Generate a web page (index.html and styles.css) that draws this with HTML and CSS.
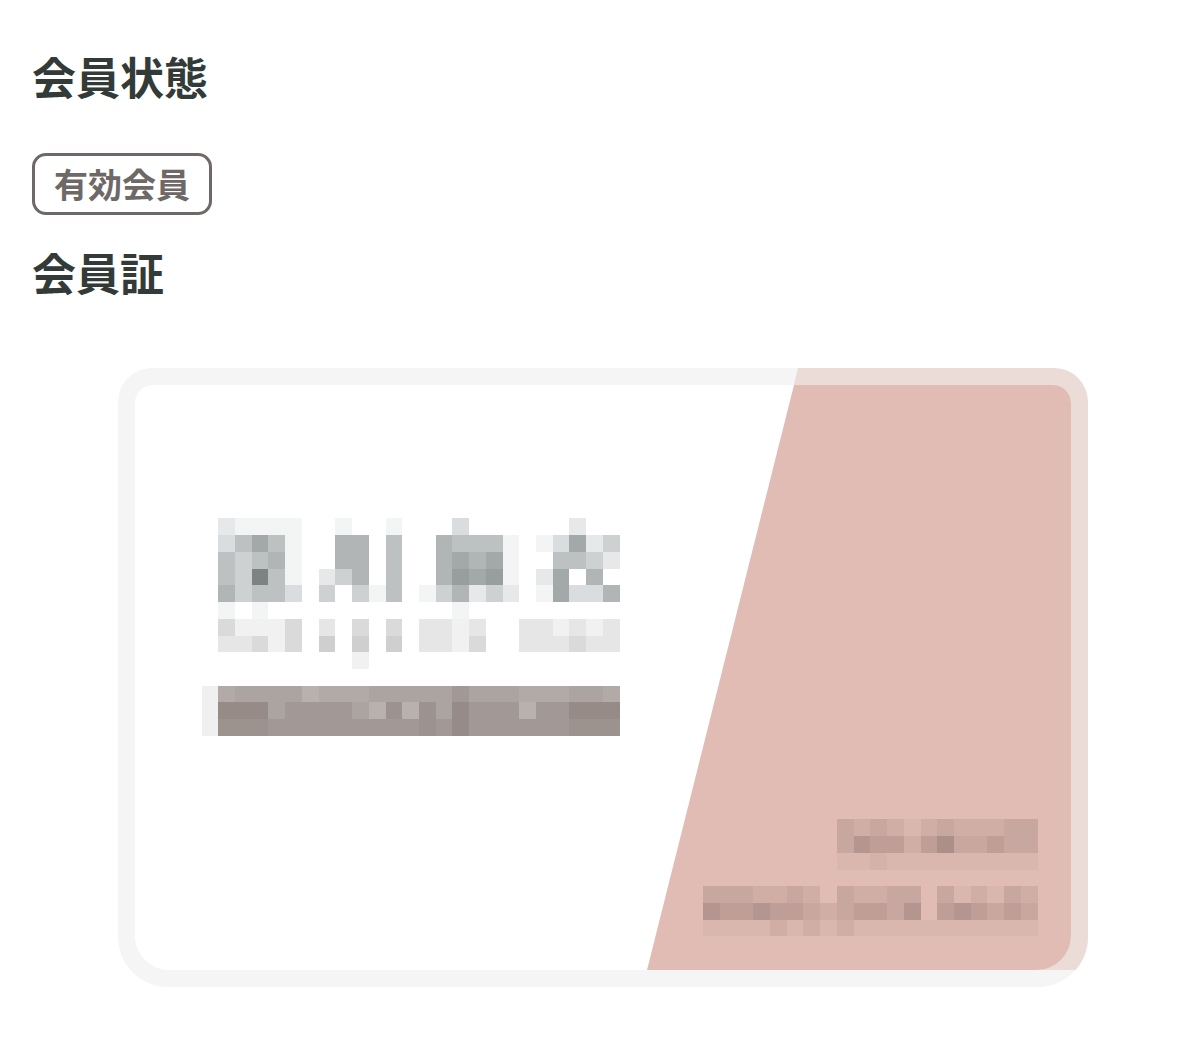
FILE: index.html
```html
<!DOCTYPE html>
<html lang="ja">
<head>
<meta charset="utf-8">
<title>会員状態</title>
<link rel="stylesheet" href="styles.css">
</head>
<body>
<main class="page">
  <h2 class="heading">会員状態</h2>
  <div class="status-row"><span class="badge">有効会員</span></div>
  <h2 class="heading heading-card">会員証</h2>
  <div class="card-wrap">
    <div class="card">
      <div class="card-inner">
        <div class="mosaic name-block">
          <i></i><i class="g2"></i><i class="g1"></i><i class="g1"></i><i class="g1"></i><i class="g1"></i><i></i><i></i><i class="g1"></i><i></i><i></i><i class="g1"></i><i></i><i></i><i></i><i class="g3"></i><i></i><i></i><i></i><i></i><i></i><i></i><i class="g2"></i><i></i><i></i>
          <i></i><i class="g3"></i><i class="g5"></i><i class="g7"></i><i class="g5"></i><i class="g1"></i><i></i><i></i><i class="g6"></i><i class="g6"></i><i></i><i class="g5"></i><i></i><i></i><i class="g6"></i><i class="g5"></i><i class="g5"></i><i class="g5"></i><i class="g1"></i><i></i><i class="g1"></i><i class="g3"></i><i class="g7"></i><i class="g2"></i><i class="g4"></i>
          <i></i><i class="g5"></i><i class="g4"></i><i class="g5"></i><i class="g6"></i><i class="g1"></i><i></i><i></i><i class="g6"></i><i class="g6"></i><i></i><i class="g5"></i><i></i><i></i><i class="g6"></i><i class="g7"></i><i class="g6"></i><i class="g7"></i><i class="g1"></i><i></i><i></i><i class="g5"></i><i class="g5"></i><i class="g4"></i><i class="g2"></i>
          <i></i><i class="g5"></i><i class="g4"></i><i class="g9"></i><i class="g5"></i><i class="g1"></i><i></i><i class="g2"></i><i class="g4"></i><i class="g6"></i><i></i><i class="g5"></i><i></i><i></i><i class="g6"></i><i class="g8"></i><i class="g7"></i><i class="g8"></i><i class="g1"></i><i></i><i class="g2"></i><i class="g7"></i><i></i><i class="g6"></i><i></i>
          <i></i><i class="g6"></i><i class="g4"></i><i class="g5"></i><i class="g5"></i><i class="g3"></i><i></i><i class="g4"></i><i></i><i class="g4"></i><i class="g1"></i><i class="g5"></i><i></i><i class="g1"></i><i class="g4"></i><i class="g6"></i><i class="g2"></i><i class="g4"></i><i class="g2"></i><i></i><i class="g1"></i><i class="g7"></i><i class="g3"></i><i class="g3"></i><i class="g6"></i>
          <i></i><i class="g1"></i><i></i><i class="g1"></i><i></i><i></i><i></i><i></i><i></i><i></i><i></i><i></i><i></i><i></i><i></i><i class="g1"></i><i></i><i></i><i></i><i></i><i></i><i></i><i></i><i></i><i></i>
          <i></i><i class="n3"></i><i class="n1"></i><i class="n1"></i><i class="n1"></i><i class="n3"></i><i></i><i class="n2"></i><i></i><i class="n3"></i><i></i><i class="n3"></i><i></i><i class="n2"></i><i class="n2"></i><i class="n1"></i><i class="n2"></i><i></i><i></i><i class="n2"></i><i class="n2"></i><i class="n1"></i><i class="n2"></i><i class="n1"></i><i class="n2"></i>
          <i></i><i class="n2"></i><i class="n2"></i><i class="n3"></i><i class="n1"></i><i class="n3"></i><i></i><i class="n4"></i><i></i><i class="n4"></i><i></i><i class="n4"></i><i></i><i class="n2"></i><i class="n2"></i><i class="n1"></i><i class="n3"></i><i></i><i></i><i class="n2"></i><i class="n2"></i><i class="n2"></i><i class="n3"></i><i class="n2"></i><i class="n2"></i>
          <i></i><i></i><i></i><i></i><i></i><i></i><i></i><i></i><i></i><i class="n1"></i><i></i><i></i><i></i><i></i><i></i><i></i><i></i><i></i><i></i><i></i><i></i><i></i><i></i><i></i><i></i>
          <i></i><i></i><i></i><i></i><i></i><i></i><i></i><i></i><i></i><i></i><i></i><i></i><i></i><i></i><i></i><i></i><i></i><i></i><i></i><i></i><i></i><i></i><i></i><i></i><i></i>
          <i class="e"></i><i class="b1"></i><i class="b2"></i><i class="b2"></i><i class="b2"></i><i class="b2"></i><i class="b6"></i><i class="b1"></i><i class="b1"></i><i class="b1"></i><i class="b2"></i><i class="b2"></i><i class="b2"></i><i class="b2"></i><i class="b2"></i><i class="b3"></i><i class="b2"></i><i class="b2"></i><i class="b2"></i><i class="b1"></i><i class="b1"></i><i class="b1"></i><i class="b2"></i><i class="b2"></i><i class="b1"></i>
          <i class="e"></i><i class="b5"></i><i class="b5"></i><i class="b5"></i><i class="b2"></i><i class="b3"></i><i class="b3"></i><i class="b3"></i><i class="b3"></i><i class="b2"></i><i class="b6"></i><i class="b4"></i><i class="b6"></i><i class="b4"></i><i class="b2"></i><i class="b5"></i><i class="b3"></i><i class="b3"></i><i class="b3"></i><i class="b6"></i><i class="b3"></i><i class="b3"></i><i class="b5"></i><i class="b5"></i><i class="b5"></i>
          <i class="e"></i><i class="b4"></i><i class="b4"></i><i class="b4"></i><i class="b3"></i><i class="b3"></i><i class="b3"></i><i class="b3"></i><i class="b3"></i><i class="b3"></i><i class="b3"></i><i class="b3"></i><i class="b3"></i><i class="b4"></i><i class="b3"></i><i class="b5"></i><i class="b3"></i><i class="b3"></i><i class="b3"></i><i class="b3"></i><i class="b3"></i><i class="b3"></i><i class="b4"></i><i class="b4"></i><i class="b4"></i>
        </div>
        <div class="mosaic code-block">
          <i class="p3"></i><i class="p2"></i><i class="p3"></i><i class="p2"></i><i class="p1"></i><i class="p2"></i><i class="p3"></i><i class="p2"></i><i class="p2"></i><i class="p2"></i><i class="p3"></i><i class="p3"></i>
          <i class="p3"></i><i class="p5"></i><i class="p4"></i><i class="p4"></i><i class="p2"></i><i class="p4"></i><i class="p6"></i><i class="p3"></i><i class="p3"></i><i class="p4"></i><i class="p3"></i><i class="p3"></i>
          <i class="p1"></i><i class="p1"></i><i class="p7"></i><i class="p1"></i><i class="p1"></i><i class="p1"></i><i class="p1"></i><i class="p1"></i><i class="p1"></i><i class="p1"></i><i class="p1"></i><i class="p1"></i>
        </div>
        <div class="mosaic date-block">
          <i class="p3"></i><i class="p3"></i><i class="p3"></i><i class="p2"></i><i class="p2"></i><i class="p3"></i><i class="p2"></i><i></i><i class="p3"></i><i class="p2"></i><i class="p2"></i><i class="p3"></i><i class="p3"></i><i></i><i class="p3"></i><i class="p1"></i><i class="p2"></i><i class="p1"></i><i class="p3"></i><i class="p2"></i>
          <i class="p5"></i><i class="p4"></i><i class="p4"></i><i class="p5"></i><i class="p4"></i><i class="p4"></i><i class="p3"></i><i class="p2"></i><i class="p3"></i><i class="p4"></i><i class="p4"></i><i class="p3"></i><i class="p5"></i><i></i><i class="p4"></i><i class="p5"></i><i class="p4"></i><i class="p3"></i><i class="p4"></i><i class="p3"></i>
          <i class="p1"></i><i class="p1"></i><i class="p1"></i><i class="p1"></i><i class="p2"></i><i class="p1"></i><i class="p2"></i><i class="p1"></i><i class="p2"></i><i class="p1"></i><i class="p1"></i><i class="p1"></i><i class="p1"></i><i class="p1"></i><i class="p1"></i><i class="p1"></i><i class="p1"></i><i class="p1"></i><i class="p1"></i><i class="p1"></i>
        </div>
      </div>
    </div>
  </div>
</main>
</body>
</html>
```
FILE: styles.css
```css
* { box-sizing: border-box; }

html, body {
  margin: 0;
  padding: 0;
  background: #ffffff;
}

body {
  font-family: "Noto Sans CJK JP", "Noto Sans", sans-serif;
  color: #333b39;
}

.page {
  --c: 16.724px;
  padding: 54px 32px 40px 32px;
}

.heading {
  margin: 0;
  font-size: 44px;
  line-height: 44px;
  font-weight: 700;
  color: #333b39;
}

.status-row {
  margin-top: 55px;
  display: flex;
}

.badge {
  display: inline-block;
  border: 3px solid #6e6866;
  border-radius: 14px;
  padding: 11px 19px;
  font-size: 34px;
  line-height: 34px;
  font-weight: 700;
  color: #6e6866;
}

.heading-card {
  margin-top: 35px;
}

.card-wrap {
  margin-top: 74px;
  padding-left: 86px;
}

.card {
  position: relative;
  width: calc(58 * var(--c));
  height: calc(37 * var(--c));
  padding: var(--c);
  background: #f5f5f6;
  border-radius: 34px 34px 50px 50px;
}

.card::before {
  content: "";
  position: absolute;
  inset: 0;
  border-radius: inherit;
  background: #ebdcd7;
  clip-path: polygon(680px 0, 100% 0, 100% calc(100% - var(--c)), 530px calc(100% - var(--c)));
}

.card-inner {
  position: relative;
  width: 100%;
  height: 100%;
  background: #ffffff;
  border-radius: 18px 18px 34px 34px;
  overflow: hidden;
  display: grid;
  grid-template-columns: repeat(56, var(--c));
  grid-template-rows: repeat(35, var(--c));
}

.card-inner::before {
  content: "";
  position: absolute;
  inset: 0;
  background: #e0bcb4;
  clip-path: polygon(70.4% 0, 100% 0, 100% 100%, 54.7% 100%);
}

.mosaic {
  position: relative;
  display: grid;
  grid-auto-rows: var(--c);
}

.mosaic i {
  display: block;
}

.name-block {
  grid-column: 5 / span 25;
  grid-row: 9 / span 13;
  grid-template-columns: repeat(25, var(--c));
}

.code-block {
  grid-column: 43 / span 12;
  grid-row: 27 / span 3;
  grid-template-columns: repeat(12, var(--c));
}

.date-block {
  grid-column: 35 / span 20;
  grid-row: 31 / span 3;
  grid-template-columns: repeat(20, var(--c));
}

/* name mosaic (cool gray) */
.g1 { background: #f3f4f4; }
.g2 { background: #e7e8e9; }
.g3 { background: #dadddf; }
.g4 { background: #cdd1d2; }
.g5 { background: #bdc1c2; }
.g6 { background: #b1b5b6; }
.g7 { background: #a3a8a9; }
.g8 { background: #989e9e; }
.g9 { background: #7d8383; }

/* romaji mosaic (neutral gray) */
.n1 { background: #f1f1f1; }
.n2 { background: #e6e6e7; }
.n3 { background: #dadadb; }
.n4 { background: #cfcfd0; }

/* bar mosaic */
.e  { background: #f0f0f0; }
.b1 { background: #b1aaa6; }
.b2 { background: #aca4a0; }
.b3 { background: #a29996; }
.b4 { background: #9c928e; }
.b5 { background: #968b87; }
.b6 { background: #b8b1ae; }

/* pink mosaic */
.p1 { background: #d9b6ae; }
.p2 { background: #d0aea6; }
.p3 { background: #c8a7a1; }
.p4 { background: #bf9e98; }
.p5 { background: #b49590; }
.p6 { background: #ad8f8a; }
.p7 { background: #d4b2aa; }
```
